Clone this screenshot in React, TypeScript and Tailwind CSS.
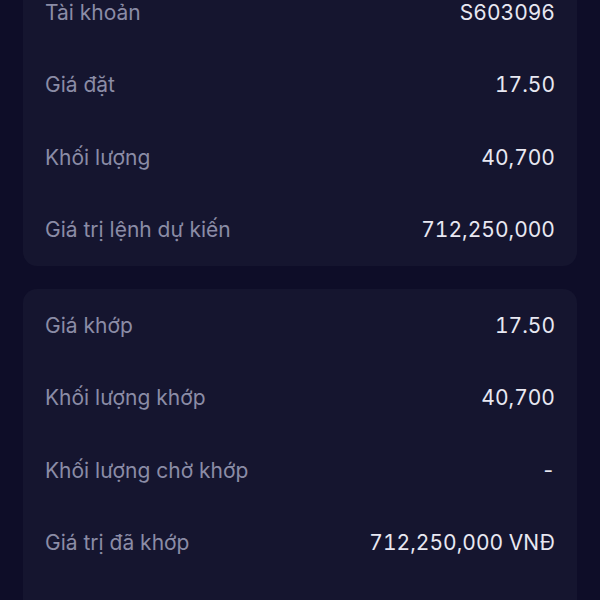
const orderInfo = [
  { label: 'Tài khoản', value: 'S603096' },
  { label: 'Giá đặt', value: '17.50' },
  { label: 'Khối lượng', value: '40,700' },
  { label: 'Giá trị lệnh dự kiến', value: '712,250,000' },
]

const matchInfo = [
  { label: 'Giá khớp', value: '17.50' },
  { label: 'Khối lượng khớp', value: '40,700' },
  { label: 'Khối lượng chờ khớp', value: '-' },
  { label: 'Giá trị đã khớp', value: '712,250,000 VNĐ' },
  { label: '', value: '' },
]

function InfoCard({ rows }: { rows: { label: string; value: string }[] }) {
  return (
    <div className="rounded-[14px] bg-[#15152f] px-[22px]">
      {rows.map((row, i) => (
        <div key={i} className="flex h-[72.5px] items-center justify-between">
          <span className="text-[21px] text-[#8b8ca6]">{row.label}</span>
          <span className="text-[21px] text-[#e8e8f2] tabular-nums">{row.value}</span>
        </div>
      ))}
    </div>
  )
}

export default function App() {
  return (
    <div
      className="h-[600px] w-[600px] overflow-hidden bg-[#0e0d28] px-[23px]"
      style={{ fontFamily: 'Inter, "Noto Sans", sans-serif' }}
    >
      <div className="mt-[-24px] flex flex-col gap-[23px]">
        <InfoCard rows={orderInfo} />
        <InfoCard rows={matchInfo} />
      </div>
    </div>
  )
}
